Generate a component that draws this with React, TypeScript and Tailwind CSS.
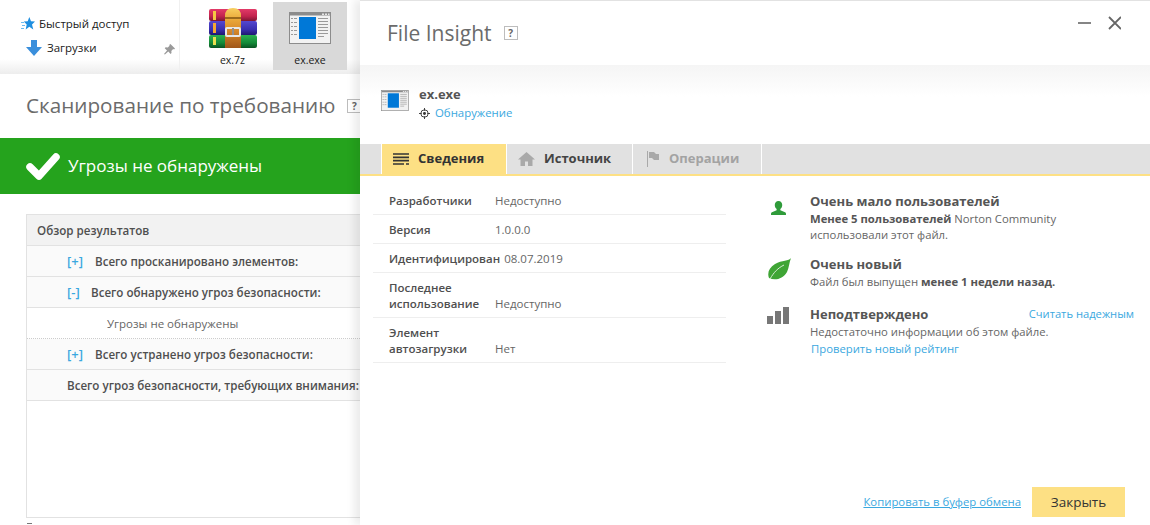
const ExeIcon = ({ className }: { className: string }) => (
  <svg viewBox="0 0 42 32" className={className}>
    <rect x="0.5" y="0.5" width="41" height="31" fill="#f2f2f2" stroke="#8c8c8c" />
    <rect x="1" y="1" width="40" height="2.5" fill="#8c8c8c" />
    <rect x="33" y="1.5" width="2" height="1.5" fill="#e6e6e6" />
    <rect x="36" y="1.5" width="2" height="1.5" fill="#e6e6e6" />
    <rect x="39" y="1.5" width="1.5" height="1.5" fill="#e6e6e6" />
    <rect x="10" y="5" width="17" height="22" fill="#0078d7" />
    <g fill="#9a9a9a">
      <rect x="2" y="6" width="2" height="1" />
      <rect x="5" y="6" width="3" height="1" />
      <rect x="2" y="10" width="2" height="1" />
      <rect x="5" y="10" width="3" height="1" />
      <rect x="2" y="14" width="2" height="1" />
      <rect x="5" y="14" width="3" height="1" />
      <rect x="2" y="18" width="2" height="1" />
      <rect x="5" y="18" width="3" height="1" />
      <rect x="2" y="22" width="2" height="1" />
      <rect x="5" y="22" width="3" height="1" />
      <rect x="29" y="6" width="10" height="1" />
      <rect x="29" y="9" width="10" height="1" />
      <rect x="29" y="12" width="10" height="1" />
      <rect x="29" y="15" width="10" height="1" />
      <rect x="29" y="18" width="10" height="1" />
      <rect x="29" y="21" width="10" height="1" />
      <rect x="29" y="24" width="6" height="1" />
    </g>
  </svg>
);

const RarIcon = () => (
  <svg viewBox="0 0 48 40" className="h-[40px] w-[48px]">
    <defs>
      <linearGradient id="red" x1="0" y1="0" x2="0" y2="1">
        <stop offset="0" stopColor="#e23a68" />
        <stop offset="0.6" stopColor="#c2244e" />
        <stop offset="1" stopColor="#7c1634" />
      </linearGradient>
      <linearGradient id="blue" x1="0" y1="0" x2="0" y2="1">
        <stop offset="0" stopColor="#5548d0" />
        <stop offset="0.6" stopColor="#3a2fb0" />
        <stop offset="1" stopColor="#1e1670" />
      </linearGradient>
      <linearGradient id="grn" x1="0" y1="0" x2="0" y2="1">
        <stop offset="0" stopColor="#2cb050" />
        <stop offset="0.6" stopColor="#148a38" />
        <stop offset="1" stopColor="#0a5222" />
      </linearGradient>
      <linearGradient id="belt" x1="0" y1="0" x2="0" y2="1">
        <stop offset="0" stopColor="#f7cf60" />
        <stop offset="0.28" stopColor="#eaa93a" />
        <stop offset="0.55" stopColor="#d98a2a" />
        <stop offset="1" stopColor="#a0561a" />
      </linearGradient>
    </defs>
    <rect x="0" y="1" width="48" height="12" rx="2" fill="url(#red)" />
    <rect x="0" y="13" width="48" height="14" rx="2" fill="url(#blue)" />
    <rect x="0" y="27" width="48" height="13" rx="2" fill="url(#grn)" />
    <rect x="4" y="3" width="3" height="9" fill="#f5c842" />
    <rect x="4" y="15" width="3" height="10" fill="#f5a832" />
    <rect x="4" y="29" width="3" height="8" fill="#e8e050" />
    <path d="M16 40V8q0-8 8-8t8 8v32z" fill="url(#belt)" />
    <rect x="16" y="9" width="16" height="2" fill="#9a6a1c" />
    <rect x="17" y="20" width="14" height="8" rx="1" fill="none" stroke="#e8e8e8" strokeWidth="2" />
    <rect x="23" y="20" width="2" height="7" fill="#8f8f8f" />
  </svg>
);

const StarIcon = () => (
  <svg viewBox="0 0 14 14" className="h-[14px] w-[14px]">
    <path d="M8.300 0l1.700 4.300 4 .2-3 2.900 1.300 5.100-4-2.700-3.600 2.700L5.700 7.400 2.800 4.500l3.900-.2z" fill="#1f8fe0" />
    <path d="M0 5.500h3M1 8.500h3M0 11.500h3" stroke="#6bbcf0" strokeWidth="1.200" />
  </svg>
);

const ArrowIcon = () => (
  <svg viewBox="0 0 16 16" className="h-4 w-4">
    <path d="M5 0h6v7h5l-8 9-8-9h5z" fill="#3a8fdc" />
  </svg>
);

const PinIcon = () => (
  <svg viewBox="0 0 12 12" className="h-[11px] w-[11px]">
    <path d="M7 0l5 5-1 1-1-.5-2 2 .2 2.300-1 1-2.500-2.700L1 11.500 0 11l3.300-3.900L.8 4.600l1-1 2.300.2 2-2L5.700 1z" fill="#9a9a9a" />
  </svg>
);

const CheckIcon = () => (
  <svg viewBox="0 0 34 27" className="h-[27px] w-[34px]">
    <path d="M4 14l9 9L30 4" fill="none" stroke="#fff" strokeWidth="7.500" strokeLinecap="round" strokeLinejoin="round" />
  </svg>
);

const HelpBox = ({ className }: { className: string }) => (
  <span className={`flex h-[14px] w-[14px] items-center justify-center border border-[#bdbdbd] bg-white text-[10px] font-bold leading-none text-[#666] ${className}`}>
    ?
  </span>
);

const rows = [
  { mark: "[+]", markWidth: "w-[28px]", text: "Всего просканировано элементов:" },
  { mark: "[-]", markWidth: "w-[24px]", text: "Всего обнаружено угроз безопасности:" },
];

const Row = ({ mark, markWidth, text }: { mark?: string; markWidth?: string; text: string }) => (
  <div className="flex h-[31px] items-center whitespace-nowrap border-b border-[#e2e2e2] bg-[#fafafa] pl-[40px] pt-[1px] text-[11.600px] font-semibold text-[#4f4f4f]">
    {mark && <span className={`${markWidth} shrink-0 text-[13px] text-[#3aa8e0]`}>{mark}</span>}
    <span>{text}</span>
  </div>
);

const Detail = ({ label, value, tall }: { label: string; value: string; tall?: boolean }) => (
  <div className={`flex items-end border-b border-[#eee] pb-[5px] pl-[16px] text-[11.500px] leading-[16px] text-[#666] ${tall ? "h-[45px]" : "h-[29px]"}`}>
    <span className="w-[106px] shrink-0 font-semibold text-[#4f4f4f]">{label}</span>
    <span className="whitespace-nowrap">{value}</span>
  </div>
);

export default function App() {
  return (
    <div className="relative flex h-[525px] w-[1150px] overflow-hidden bg-white font-['Open_Sans',sans-serif]">
      {/* left side: explorer and the scan window */}
      <div className="flex w-[360px] shrink-0 flex-col">
        <div className="flex h-[74px] shrink-0 bg-gradient-to-b from-white from-80% to-[#ededed] text-[11.500px] text-[#1a1a1a]">
          <div className="flex h-[70px] w-[180px] shrink-0 flex-col border-r border-[#f0f0f0] pl-[21px] pt-[16px]">
            <div className="flex h-[16px] items-center gap-[4px]">
              <StarIcon />
              <span className="whitespace-nowrap">Быстрый доступ</span>
            </div>
            <div className="mt-[8px] flex h-[16px] items-center pl-[5px]">
              <ArrowIcon />
              <span className="ml-[5px]">Загрузки</span>
              <span className="ml-[67px] mt-[2px]"><PinIcon /></span>
            </div>
          </div>
          <div className="ml-[20px] flex w-[65px] shrink-0 flex-col items-center pt-[8px]">
            <RarIcon />
            <span className="mt-[5px] text-[10.500px]">ex.7z</span>
          </div>
          <div className="ml-[8px] mt-[2px] flex h-[68px] w-[74px] shrink-0 flex-col items-center bg-[#d9d9d9] pt-[10px]">
            <ExeIcon className="h-[32px] w-[42px]" />
            <span className="mt-[9px] text-[10.500px]">ex.exe</span>
          </div>
        </div>
        <div className="flex flex-1 flex-col">
          <div className="flex h-[64px] shrink-0 items-center pl-[26px]">
            <span className="whitespace-nowrap text-[20.700px] text-[#6b6b6b]">Сканирование по требованию</span>
            <HelpBox className="ml-[12px] shrink-0" />
          </div>
          <div className="flex h-[56px] shrink-0 items-center bg-[#25a31d] pl-[26px] text-white">
            <CheckIcon />
            <span className="ml-[8px] whitespace-nowrap text-[17px]">Угрозы не обнаружены</span>
          </div>
          <div className="ml-[26px] mt-[20px] flex h-[304px] shrink-0 flex-col border-b border-l border-t border-[#e2e2e2]">
            <div className="flex h-[31px] items-center border-b border-[#e2e2e2] bg-[#f2f2f2] pl-[10px] pt-[1px] text-[11.600px] font-semibold text-[#4f4f4f]">
              Обзор результатов
            </div>
            {rows.map((row) => (
              <Row key={row.text} {...row} />
            ))}
            <div className="flex h-[31px] items-center border-b border-dotted border-[#ccc] pl-[80px] pt-[1px] text-[11.500px] text-[#666]">
              Угрозы не обнаружены
            </div>
            <Row mark="[+]" markWidth="w-[28px]" text="Всего устранено угроз безопасности:" />
            <Row text="Всего угроз безопасности, требующих внимания:" />
          </div>
          <div className="ml-[27px] mt-[5px] h-[1px] w-[5px] shrink-0 bg-[#777]" />
        </div>
      </div>

      {/* File Insight panel */}
      <div className="z-10 flex flex-1 flex-col border-t border-[#e2e2e2] bg-white shadow-[-6px_0_8px_rgba(0,0,0,0.08)]">
        <div className="flex h-[64px] shrink-0 items-center pl-[27px] pr-[29px]">
          <span className="pt-[1px] text-[21px] text-[#6b6b6b]">File Insight</span>
          <HelpBox className="ml-[12px]" />
          <svg viewBox="0 0 44 14" className="ml-auto mt-[-20px] h-[14px] w-[44px]">
            <path d="M1 7h13" stroke="#666" strokeWidth="1.600" />
            <path d="M32 1l12 12M44 1L32 13" stroke="#666" strokeWidth="1.800" />
          </svg>
        </div>
        <div className="flex h-[79px] shrink-0 items-start bg-gradient-to-b from-[#f5f5f5] to-white to-40% pl-[21px] pt-[20px]">
          <ExeIcon className="mt-[5px] h-[21px] w-[28px]" />
          <div className="ml-[10px]">
            <div className="text-[13px] font-bold leading-[18px] text-[#555]">ex.exe</div>
            <div className="mt-[1px] flex items-center text-[11.400px] leading-[18px] text-[#3aa8e0]">
              <svg viewBox="0 0 12 12" className="mr-[5px] h-[11px] w-[11px]">
                <circle cx="6" cy="6" r="4" fill="none" stroke="#333" strokeWidth="1" />
                <circle cx="6" cy="6" r="1.600" fill="#333" />
                <path d="M6 0v3M6 9v3M0 6h3M9 6h3" stroke="#333" strokeWidth="1" />
              </svg>
              Обнаружение
            </div>
          </div>
        </div>
        <div className="flex h-[32px] shrink-0 border-b-[2px] border-[#fde084] bg-[#e1e1e1] pl-[21px] text-[13px] font-bold">
          <div className="flex w-[126px] items-center border-l border-r border-white bg-[#fde084] pl-[11px] text-[#333]">
            <svg viewBox="0 0 16 12" className="mr-[9px] h-[12px] w-[16px]">
              <path d="M0 1h16M0 4.300h16M0 7.600h16M0 11h11M13 11h3" stroke="#333" strokeWidth="1.700" />
            </svg>
            Сведения
          </div>
          <div className="flex w-[126px] items-center border-r border-white pl-[11px] text-[#444]">
            <svg viewBox="0 0 17 14" className="mr-[9px] h-[14px] w-[17px]">
              <path d="M8.500 0L0 7.500h2.500V14h4.500V9.500h3V14h4.500V7.500H17z" fill="#a9a9a9" />
            </svg>
            Источник
          </div>
          <div className="flex w-[129px] items-center border-r border-white pl-[14px] text-[#a3a3a3]">
            <svg viewBox="0 0 12 16" className="mr-[10px] h-[16px] w-[12px]">
              <path d="M0.500 0v16" stroke="#a9a9a9" strokeWidth="1" />
              <path d="M2 1h5l2 2h3v6H7L5 7H2z" fill="#a9a9a9" />
            </svg>
            Операции
          </div>
        </div>
        <div className="flex flex-1">
          <div className="ml-[13px] mt-[10px] w-[353px] shrink-0">
            <Detail label="Разработчики" value="Недоступно" />
            <Detail label="Версия" value="1.0.0.0" />
            <div className="flex h-[29px] items-end border-b border-[#eee] pb-[5px] pl-[16px] text-[11.500px] leading-[16px] text-[#666]">
              <span className="font-semibold text-[#4f4f4f]">Идентифицирован</span>
              <span className="ml-[4px] whitespace-nowrap">08.07.2019</span>
            </div>
            <Detail label="Последнее использование" value="Недоступно" tall />
            <Detail label="Элемент автозагрузки" value="Нет" tall />
          </div>
          <div className="ml-[32px] flex flex-1 flex-col pr-[16px] pt-[17px] text-[11.300px] leading-[16px] text-[#666]">
            <div className="flex">
              <div className="flex w-[52px] shrink-0 justify-start pl-[13px] pt-[8px]">
                <svg viewBox="0 0 16 15" className="h-[14px] w-[15px]">
                  <path d="M8 0c2.600 0 4 1.900 4 4.300 0 2-.9 3.500-2 4.200v1.300l5 2.200c.6.300 1 .8 1 1.500V15H0v-1.500c0-.7.4-1.200 1-1.500l5-2.200V8.500C4.900 7.800 4 6.300 4 4.300 4 1.900 5.400 0 8 0z" fill="#2f9b3a" />
                </svg>
              </div>
              <div>
                <div className="text-[13px] font-bold leading-[16px] text-[#555]">Очень мало пользователей</div>
                <div className="mt-[2px]"><b className="text-[#555]">Менее 5 пользователей</b> Norton Community</div>
                <div>использовали этот файл.</div>
              </div>
            </div>
            <div className="mt-[13px] flex">
              <div className="flex w-[52px] shrink-0 pl-[9px] pt-[2px]">
                <svg viewBox="0 0 24 22" className="h-[22px] w-[24px]">
                  <path d="M24 0C22 3 15 2 8 6 2 9.500 0 15 2 20c6 3 14 1 18-6 2-4 2-9 4-14z" fill="#3fa535" />
                  <path d="M3 21C7 14 11 10 17 7" fill="none" stroke="#d5ecd2" strokeWidth="1" />
                </svg>
              </div>
              <div>
                <div className="text-[13px] font-bold leading-[16px] text-[#555]">Очень новый</div>
                <div className="mt-[2px]">Файл был выпущен <b className="text-[#555]">менее 1 недели назад.</b></div>
              </div>
            </div>
            <div className="mt-[16px] flex">
              <div className="flex w-[52px] shrink-0 items-end gap-[2px] self-start pl-[9px] pt-[1px]">
                <span className="h-[8px] w-[6px] bg-[#777]" />
                <span className="h-[13px] w-[6px] bg-[#777]" />
                <span className="h-[17px] w-[6px] bg-[#777]" />
              </div>
              <div className="flex-1">
                <div className="flex items-start justify-between">
                  <span className="text-[13px] font-bold leading-[16px] text-[#555]">Неподтверждено</span>
                  <span className="text-[11.200px] text-[#3aa8e0]">Считать надежным</span>
                </div>
                <div className="mt-[2px] whitespace-nowrap">Недостаточно информации об этом файле.</div>
                <div className="ml-[1px] mt-[1px] text-[#3aa8e0]">Проверить новый рейтинг</div>
              </div>
            </div>
            <div className="mt-auto flex items-center justify-end gap-[11px] pb-[8px] pr-[9px]">
              <span className="text-[11.350px] text-[#3aa8e0] underline">Копировать в буфер обмена</span>
              <button className="h-[30px] w-[93px] bg-[#fde084] text-[13.500px] text-[#333]">Закрыть</button>
            </div>
          </div>
        </div>
      </div>
    </div>
  );
}
